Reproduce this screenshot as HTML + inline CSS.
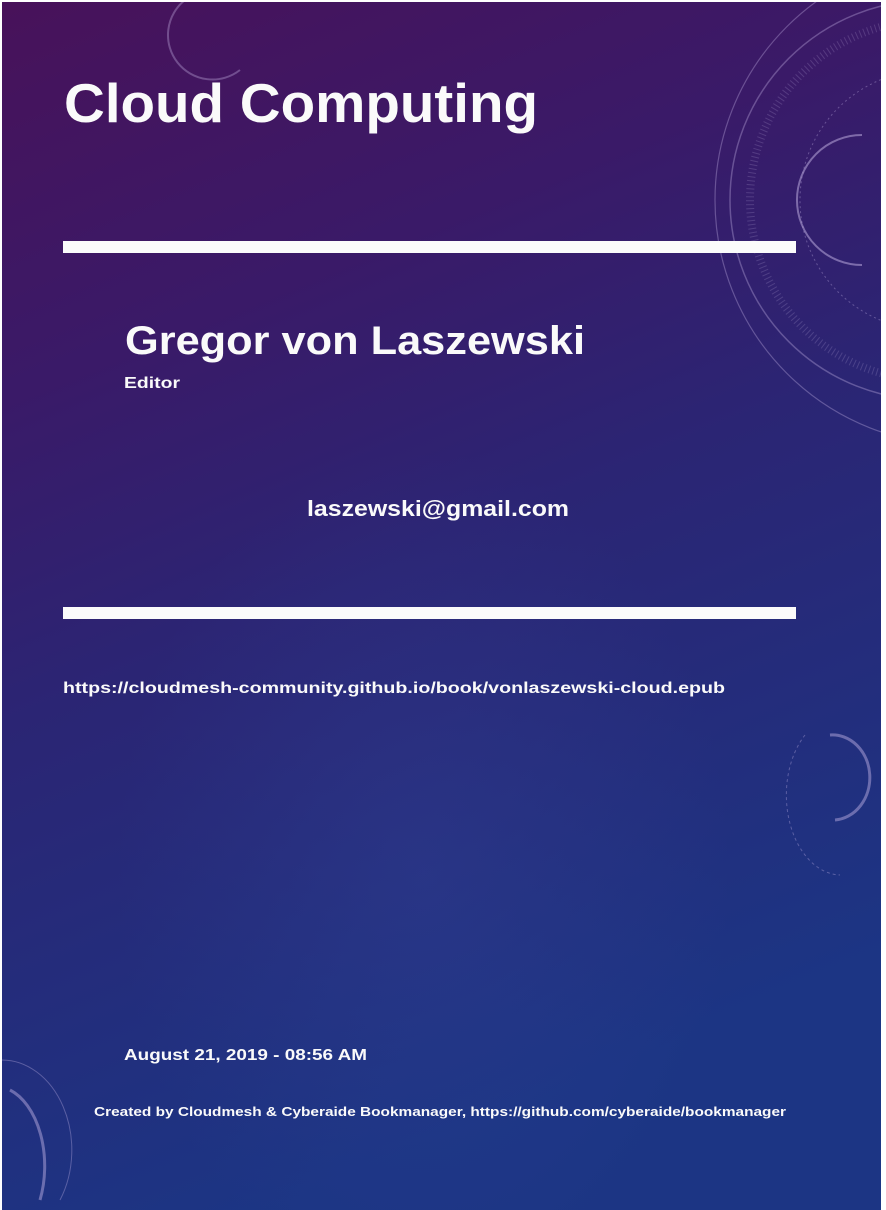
<!DOCTYPE html>
<html><head><meta charset="utf-8"><style>
html,body{margin:0;padding:0;background:#fff;width:886px;height:1210px;overflow:hidden}
svg{display:block}
text{font-family:"Liberation Sans",sans-serif;font-weight:bold;fill:#fafafa}
</style></head><body>
<svg width="886" height="1210" viewBox="0 0 886 1210">
<defs>
<linearGradient id="bg" x1="0" y1="0" x2="0.3" y2="1">
<stop offset="0" stop-color="#48125a"/>
<stop offset="0.3" stop-color="#3a1a68"/>
<stop offset="0.55" stop-color="#2b2574"/>
<stop offset="1" stop-color="#1c3584"/>
</linearGradient>
<radialGradient id="glow" cx="0.48" cy="0.72" r="0.35">
<stop offset="0" stop-color="#3a4aa0" stop-opacity="0.25"/>
<stop offset="1" stop-color="#3a4aa0" stop-opacity="0"/>
</radialGradient>
<clipPath id="c"><rect x="2" y="2" width="879" height="1208"/></clipPath>
</defs>
<rect x="2" y="2" width="879" height="1208" fill="url(#bg)"/>
<rect x="2" y="2" width="879" height="1208" fill="url(#glow)"/>
<g fill="none" stroke="#c8b8e8" stroke-opacity="0.35" clip-path="url(#c)">
<circle cx="930" cy="200" r="200" stroke-width="1.5"/>
<circle cx="930" cy="200" r="180" stroke-width="8" stroke-dasharray="1 3" stroke-opacity="0.2"/>
<circle cx="930" cy="200" r="130" stroke-dasharray="2 3"/>
<path d="M862 135 A60 60 0 1 0 862 265" stroke-width="2" stroke-opacity="0.5"/>
<circle cx="960" cy="200" r="245" stroke-width="1.2"/>
<path d="M185 0 A40 40 0 0 0 240 70" stroke-width="2"/>
<path d="M830 735 A35 40 0 1 1 835 820" stroke-width="3" stroke-opacity="0.45"/>
<path d="M805 735 A55 80 0 0 0 840 875" stroke-dasharray="3 3"/>
<path d="M10 1090 A50 80 0 0 1 40 1200" stroke-width="3" stroke-opacity="0.45"/>
<path d="M0 1060 A70 90 0 0 1 60 1200"/>
</g>
<rect x="63" y="241" width="733" height="12" fill="#fbfbfb"/>
<rect x="63" y="607" width="733" height="12" fill="#fbfbfb"/>
<text x="64" y="122" font-size="55" textLength="474" lengthAdjust="spacingAndGlyphs">Cloud Computing</text>
<text x="125" y="354" font-size="40" textLength="460" lengthAdjust="spacingAndGlyphs">Gregor von Laszewski</text>
<text x="124" y="388" font-size="16" textLength="56" lengthAdjust="spacingAndGlyphs">Editor</text>
<text x="307" y="516" font-size="22" textLength="262" lengthAdjust="spacingAndGlyphs">laszewski@gmail.com</text>
<text x="63" y="693" font-size="16" textLength="662" lengthAdjust="spacingAndGlyphs">https://cloudmesh-community.github.io/book/vonlaszewski-cloud.epub</text>
<text x="124" y="1060" font-size="16" textLength="243" lengthAdjust="spacingAndGlyphs">August 21, 2019 - 08:56 AM</text>
<text x="94" y="1116" font-size="13" textLength="692" lengthAdjust="spacingAndGlyphs">Created by Cloudmesh &amp; Cyberaide Bookmanager, https://github.com/cyberaide/bookmanager</text>
</svg>
</body></html>
